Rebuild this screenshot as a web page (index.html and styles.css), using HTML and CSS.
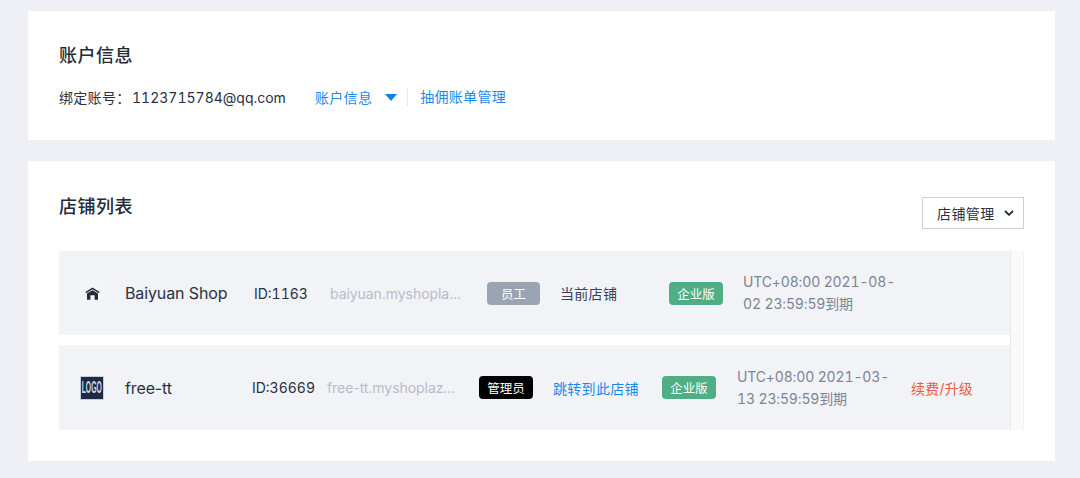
FILE: index.html
```html
<!DOCTYPE html>
<html>
<head>
    <title>账户信息</title>
    <meta charset="utf-8">
    <link rel="stylesheet" href="styles.css">
</head>
<body>

<section class="card card-account">
    <h2 class="title">账户信息</h2>
    <div class="account-line">
        <span class="account-label">绑定账号：</span>
        <span class="account-mail">1123715784@qq.com</span>
        <a class="link account-info" href="#">账户信息</a>
        <span class="triangle"></span>
        <a class="link account-bill" href="#">抽佣账单管理</a>
    </div>
</section>

<section class="card card-shops">
    <div class="card-head">
        <h2 class="title">店铺列表</h2>
        <button class="manage-btn">
            店铺管理
            <svg class="chevron" width="10" height="6" viewBox="0 0 10 6"><path d="M1 1l4 3.8L9 1" fill="none" stroke="#1f2733" stroke-width="1.8"/></svg>
        </button>
    </div>

    <div class="shop-list">
        <div class="shop-rows">
            <div class="shop-row row-current">
                <svg class="shop-icon" width="25" height="25" viewBox="0 0 25 25">
                    <rect width="25" height="25" fill="#f3f5f8"/>
                    <path d="M12.5 6.6L5.4 11l.7 1.2 6.4-3.9 6.4 3.9.7-1.2z" fill="#262a3a"/>
                    <path d="M7 12.6l5.5-3.3 5.5 3.3v6.2h-3.4v-4.6h-4.2v4.6H7z" fill="#262a3a"/>
                </svg>
                <span class="shop-name">Baiyuan Shop</span>
                <span class="shop-id">ID:1163</span>
                <span class="shop-domain">baiyuan.myshopla...</span>
                <span><span class="badge badge-staff">员工</span></span>
                <span class="shop-state">当前店铺</span>
                <span><span class="badge badge-plan">企业版</span></span>
                <span class="shop-date">UTC+08:00 2021-08-<br>02 23:59:59到期</span>
            </div>
            <div class="shop-row row-other">
                <span class="shop-logo"><span class="shop-logo-text">LOGO</span></span>
                <span class="shop-name">free-tt</span>
                <span class="shop-id">ID:36669</span>
                <span class="shop-domain">free-tt.myshoplaz...</span>
                <span><span class="badge badge-admin">管理员</span></span>
                <a class="link" href="#">跳转到此店铺</a>
                <span><span class="badge badge-plan">企业版</span></span>
                <span class="shop-date">UTC+08:00 2021-03-<br>13 23:59:59到期</span>
                <a class="renew" href="#">续费/升级</a>
            </div>
        </div>
        <div class="scroll-track"></div>
    </div>
</section>

</body>
</html>
```

FILE: styles.css
```css
* {
    box-sizing: border-box;
}

body {
    font-family: 'Inter', 'Noto Sans CJK SC', sans-serif;
    font-feature-settings: "tnum";
    background-color: #eef0f5;
    color: #2a3140;
    margin: 0;
    padding: 11px 25px 0 28px;
    font-size: 14px;
}

.card {
    background-color: #fff;
}

.card-account {
    height: 129px;
    padding: 33px 31px 0;
    margin-bottom: 21px;
}

.card-shops {
    height: 300px;
    padding: 34px 31px 0;
}

.title {
    font-size: 18px;
    font-weight: 500;
    line-height: 24px;
    letter-spacing: 0.5px;
    margin: 0;
    color: #232b38;
}

.link {
    color: #1a8aec;
    text-decoration: none;
    letter-spacing: 0.3px;
}

.account-line {
    display: flex;
    align-items: center;
    height: 20px;
    margin-top: 19px;
}

.account-label {
    width: 73px;
    letter-spacing: 0.3px;
}

.account-mail {
    width: 153px;
    white-space: nowrap;
}

.account-info {
    margin-left: 30px;
}

.triangle {
    width: 0;
    height: 0;
    margin-left: 13px;
    border-left: 6px solid transparent;
    border-right: 6px solid transparent;
    border-top: 7px solid #0a84ea;
}

.account-bill {
    margin-left: 10px;
    padding-left: 12px;
    border-left: 1px solid #e3e6ec;
    line-height: 18px;
}

.card-head {
    display: flex;
    justify-content: space-between;
    align-items: flex-start;
}

.manage-btn {
    display: flex;
    align-items: center;
    width: 102px;
    height: 32px;
    margin-top: 2px;
    padding: 0 0 0 14px;
    background-color: #fff;
    border: 1px solid #c9d1dc;
    font-family: inherit;
    font-size: 14px;
    letter-spacing: 0.4px;
    color: #2a3140;
}

.chevron {
    margin-left: 9px;
}

.shop-list {
    display: flex;
    margin-top: 22px;
    height: 179px;
}

.shop-rows {
    flex: 1;
}

.scroll-track {
    width: 14px;
    background-color: #fafafa;
    border-left: 1px solid #e9e9e9;
    border-right: 1px solid #f2f2f2;
}

.shop-row {
    display: grid;
    align-items: center;
    background-color: #f1f3f7;
    padding-left: 21px;
}

.row-current {
    height: 84px;
    margin-bottom: 10px;
    grid-template-columns: 45px 129px 76px 157px 73px 109px 74px 1fr;
}

.row-other {
    height: 85px;
    grid-template-columns: 45px 127px 75px 152px 74px 109px 75px 174px 1fr;
}

.shop-icon {
    display: block;
}

.shop-logo {
    display: flex;
    align-items: center;
    justify-content: center;
    width: 24px;
    height: 24px;
    overflow: hidden;
    background-color: #1e2a44;
    border: 1px solid #c3cde0;
}

.shop-logo-text {
    flex: none;
    font-family: 'Liberation Sans', sans-serif;
    font-size: 10px;
    font-weight: 700;
    color: #d3dbea;
    transform: scaleX(0.68) scaleY(1.6);
}

.shop-name {
    font-size: 16px;
    font-feature-settings: normal;
    letter-spacing: -0.12px;
}

.shop-id {
    white-space: nowrap;
}

.shop-domain {
    color: #b8bcc8;
    font-feature-settings: normal;
    letter-spacing: -0.06px;
}

.shop-state {
    color: #3a4252;
    letter-spacing: 0.3px;
}

.badge {
    display: inline-flex;
    align-items: center;
    justify-content: center;
    width: 54px;
    height: 23px;
    border-radius: 4px;
    font-size: 12.5px;
    color: #fff;
}

.badge-staff {
    width: 53px;
    background-color: #9ba4b3;
}

.badge-admin {
    background-color: #000;
}

.badge-plan {
    background-color: #4fae83;
}

.shop-date {
    color: #7d8494;
    line-height: 22px;
    white-space: nowrap;
    letter-spacing: -0.15px;
}

.renew {
    color: #ee5a3c;
    text-decoration: none;
    letter-spacing: 0.2px;
}
```
